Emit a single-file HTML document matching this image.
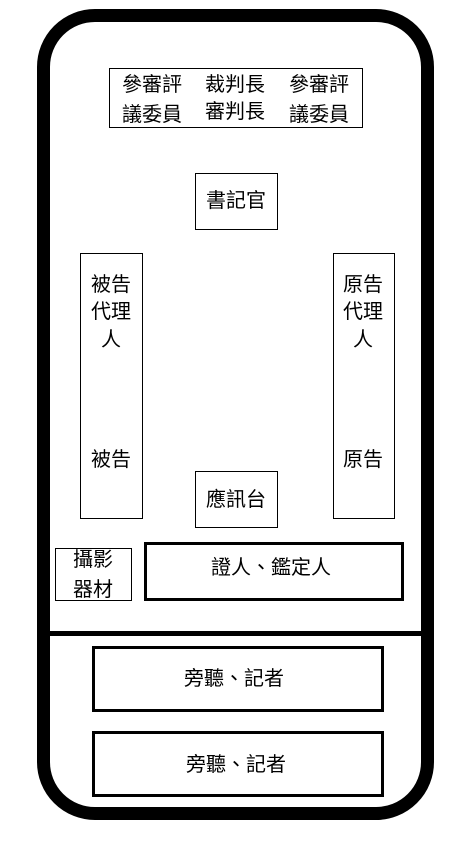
<!DOCTYPE html>
<html><head><meta charset="utf-8"><style>
body{margin:0;width:462px;height:843px;background:#fff;position:relative;overflow:hidden;font-family:"Liberation Sans","Noto Sans CJK TC",sans-serif;color:#000}
.b{position:absolute;box-sizing:border-box;border:1px solid #000;background:#fff}
.t{position:absolute;font-size:20px;line-height:22px;white-space:nowrap}
</style></head><body>
<div style="position:absolute;left:37px;top:9px;width:397px;height:811px;box-sizing:border-box;border:13px solid #000;border-radius:58px"></div>
<div style="position:absolute;left:37px;top:631px;width:397px;height:5px;background:#000"></div>

<div class="b" style="left:109px;top:68px;width:254px;height:60px"></div>
<div class="t" style="left:122px;top:74px">參審評</div>
<div class="t" style="left:205px;top:74px">裁判長</div>
<div class="t" style="left:289px;top:74px">參審評</div>
<div class="t" style="left:122px;top:104px">議委員</div>
<div class="t" style="left:205px;top:101px">審判長</div>
<div class="t" style="left:289px;top:104px">議委員</div>

<div class="b" style="left:195px;top:173px;width:83px;height:57px"></div>
<div class="t" style="left:206px;top:190px">書記官</div>

<div class="b" style="left:80px;top:253px;width:63px;height:266px"></div>
<div class="t" style="left:91px;top:274px">被告</div>
<div class="t" style="left:91px;top:301px">代理</div>
<div class="t" style="left:101px;top:329px">人</div>
<div class="t" style="left:91px;top:449px">被告</div>

<div class="b" style="left:333px;top:253px;width:62px;height:266px"></div>
<div class="t" style="left:343px;top:274px">原告</div>
<div class="t" style="left:343px;top:301px">代理</div>
<div class="t" style="left:353px;top:329px">人</div>
<div class="t" style="left:343px;top:449px">原告</div>

<div class="b" style="left:195px;top:471px;width:83px;height:57px"></div>
<div class="t" style="left:206px;top:489px">應訊台</div>

<div class="b" style="left:55px;top:548px;width:77px;height:53px"></div>
<div class="t" style="left:73px;top:549px">攝影</div>
<div class="t" style="left:73px;top:579px">器材</div>

<div class="b" style="left:144px;top:542px;width:260px;height:59px;border-width:3px"></div>
<div class="t" style="left:211px;top:557px">證人、鑑定人</div>

<div class="b" style="left:92px;top:646px;width:292px;height:66px;border-width:3px"></div>
<div class="t" style="left:184px;top:668px">旁聽、記者</div>
<div class="b" style="left:92px;top:731px;width:292px;height:66px;border-width:3px"></div>
<div class="t" style="left:186px;top:754px">旁聽、記者</div>
</body></html>
